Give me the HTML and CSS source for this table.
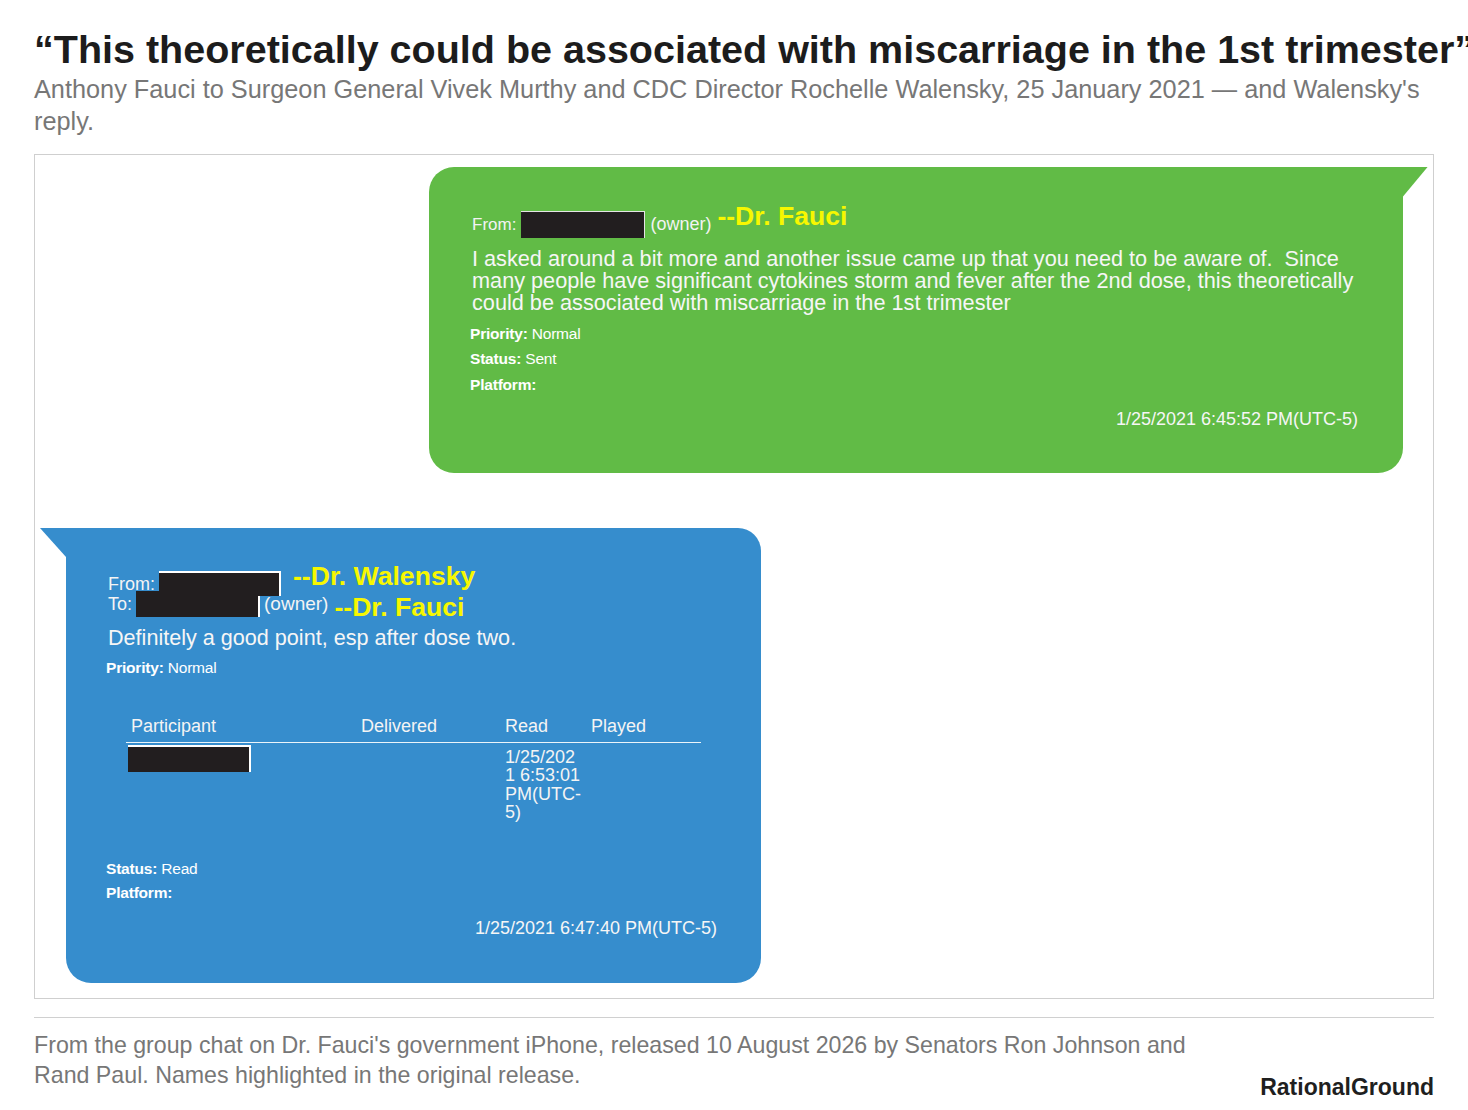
FILE: index.html
```html
<!DOCTYPE html>
<html lang="en">
<head>
<meta charset="utf-8">
<title>“This theoretically could be associated with miscarriage in the 1st trimester”</title>
<link rel="stylesheet" href="styles.css">
</head>
<body>
<main class="page">
  <header class="head">
    <h1 class="title">“This theoretically could be associated with miscarriage in the 1st trimester”</h1>
    <p class="subtitle">Anthony Fauci to Surgeon General Vivek Murthy and CDC Director Rochelle Walensky, 25 January 2021 — and Walensky's reply.</p>
  </header>

  <section class="frame">
    <article class="bubble bubble-green">
      <div class="from-line"><span>From:</span><span class="redact redact-green"></span><span class="owner owner-green">(owner)</span><span class="name name-green">--Dr. Fauci</span></div>
      <p class="msg msg-green">I asked around a bit more and another issue came up that you need to be aware of.&nbsp; Since<br>many people have significant cytokines storm and fever after the 2nd dose, this theoretically<br>could be associated with miscarriage in the 1st trimester</p>
      <div class="meta meta-green">
        <div><b>Priority:</b> Normal</div>
        <div><b>Status:</b> Sent</div>
        <div><b>Platform:</b></div>
      </div>
      <div class="stamp stamp-green">1/25/2021 6:45:52 PM(UTC-5)</div>
    </article>

    <article class="bubble bubble-blue">
      <div class="addr">
        <div class="addr-line"><span>From:</span><span class="redact redact-from"></span><span class="name name-up">--Dr. Walensky</span></div>
        <div class="addr-line"><span>To:</span><span class="redact redact-to"></span><span class="owner owner-blue">(owner)</span><span class="name name-down">--Dr. Fauci</span></div>
      </div>
      <p class="msg msg-blue">Definitely a good point, esp after dose two.</p>
      <div class="meta meta-blue">
        <div><b>Priority:</b> Normal</div>
      </div>
      <div class="receipts">
        <div class="r-head"><span>Participant</span><span>Delivered</span><span>Read</span><span>Played</span></div>
        <div class="r-row">
          <span class="r-part"><span class="redact redact-part"></span></span>
          <span></span>
          <span class="r-read">1/25/202<br>1 6:53:01<br>PM(UTC-<br>5)</span>
          <span></span>
        </div>
      </div>
      <div class="meta meta-status">
        <div><b>Status:</b> Read</div>
        <div><b>Platform:</b></div>
      </div>
      <div class="stamp stamp-blue">1/25/2021 6:47:40 PM(UTC-5)</div>
    </article>
  </section>

  <footer class="foot">
    <p class="caption">From the group chat on Dr. Fauci's government iPhone, released 10 August 2026 by Senators Ron Johnson and Rand Paul. Names highlighted in the original release.</p>
    <span class="brand">RationalGround</span>
  </footer>
</main>
</body>
</html>
```

FILE: styles.css
```css
html {
  overflow-x: hidden;
  background: #ffffff;
}

body {
  margin: 0;
  font-family: "Liberation Sans", Arial, sans-serif;
  color: #222222;
}

.page {
  width: 1400px;
  padding: 26px 34px 0;
}

.title {
  margin: 0;
  font-size: 39.5px;
  line-height: 46px;
  font-weight: bold;
  color: #1c1c1c;
  white-space: nowrap;
}

.subtitle {
  margin: 0.5px 0 0;
  font-size: 25.3px;
  line-height: 32px;
  color: #777777;
}

.frame {
  margin-top: 17px;
  border: 1px solid #cfcfcf;
  padding: 12px 0 15px;
}

.bubble {
  position: relative;
  box-sizing: border-box;
  color: #ffffff;
}

.bubble-green {
  width: 974px;
  margin: 0 30px 0 auto;
  padding: 45px 45px 43px 43px;
  background: #61bb46;
  border-radius: 25px 0 25px 25px;
}

.bubble-green::after {
  content: "";
  position: absolute;
  top: 0;
  right: -25px;
  width: 25px;
  height: 30px;
  background: #61bb46;
  clip-path: polygon(0 0, 100% 0, 0 100%);
}

.bubble-blue {
  width: 695px;
  margin: 55px 0 0 31px;
  padding: 47px 44px 44px 42px;
  background: #368dcd;
  border-radius: 0 23px 25px 25px;
}

.bubble-blue::before {
  content: "";
  position: absolute;
  top: 0;
  left: -26px;
  width: 26px;
  height: 29px;
  background: #368dcd;
  clip-path: polygon(0 0, 100% 0, 100% 100%);
}

.from-line {
  font-size: 17px;
  line-height: 24px;
  white-space: nowrap;
  color: #f3f3f3;
}

.redact {
  display: inline-block;
  box-sizing: border-box;
  background: #221e1f;
  vertical-align: baseline;
}

.redact-green {
  width: 124px;
  height: 27px;
  margin: -12px 0 -8px 5px;
  border-top: 1.5px solid #e4e4e4;
  border-right: 1.5px solid #e4e4e4;
}

.owner {
  margin-left: 5px;
}

.owner-green {
  font-size: 18px;
}

.name {
  margin-left: 9px;
  font-size: 26.6px;
  font-weight: bold;
  line-height: 0;
  color: #f7f700;
  vertical-align: 5px;
}

.name-green {
  margin-left: 6px;
}

.msg {
  margin: 0;
  color: #f6f6f6;
}

.msg-green {
  margin-top: 11px;
  font-size: 21.7px;
  line-height: 22px;
  white-space: nowrap;
}

.meta {
  font-size: 15.5px;
  line-height: 25.5px;
  letter-spacing: -0.2px;
  color: #ffffff;
}

.meta b {
  font-weight: bold;
}

.meta-green {
  margin: 7px 0 0 -2px;
}

.stamp {
  font-size: 18px;
  line-height: 22px;
  text-align: right;
  color: #f6f6f6;
}

.stamp-green {
  margin-top: 11px;
}

.addr {
  font-size: 18px;
  line-height: 19px;
  white-space: nowrap;
  color: #f4f4f4;
}

.redact-from {
  position: relative;
  z-index: 1;
  width: 122px;
  height: 25px;
  margin: -12px 0 -6px 4px;
  border-top: 2px solid #ffffff;
  border-right: 2px solid #ffffff;
}

.redact-to {
  width: 124px;
  height: 26px;
  margin: -12px 0 -7px 4px;
  border-right: 2px solid #ffffff;
}

.owner-blue {
  margin-left: 4px;
  font-size: 19px;
}

.name-up {
  margin-left: 12px;
  vertical-align: 5px;
}

.name-down {
  margin-left: 6px;
  vertical-align: -6px;
}

.msg-blue {
  margin-top: 13px;
  font-size: 21.6px;
  line-height: 22px;
}

.meta-blue {
  margin: 6px 0 0 -2px;
}

.receipts {
  width: 575px;
  margin: 34px 0 0 18px;
  color: #f4f4f4;
}

.r-head,
.r-row {
  display: grid;
  grid-template-columns: 230px 144px 86px 115px;
}

.r-head {
  font-size: 18px;
  line-height: 22px;
  padding-bottom: 5px;
  border-bottom: 1.5px solid rgba(255, 255, 255, 0.9);
}

.r-head span {
  padding-left: 5px;
}

.r-row {
  font-size: 18px;
  line-height: 18.5px;
}

.r-part {
  padding: 2.5px 0 0 2px;
}

.redact-part {
  display: block;
  width: 123px;
  height: 27px;
  border-top: 2px solid #ffffff;
  border-right: 2px solid #ffffff;
}

.r-read {
  padding: 5px 0 0 5px;
}

.meta-status {
  margin: 35px 0 0 -2px;
  line-height: 24px;
}

.stamp-blue {
  margin-top: 12px;
}

.foot {
  margin-top: 18px;
  padding-top: 12px;
  border-top: 1px solid #d0d0d0;
  display: flex;
  align-items: flex-end;
  justify-content: space-between;
  gap: 24px;
}

.caption {
  flex: 1;
  margin: 0 0 12px;
  font-size: 23.2px;
  line-height: 30px;
  color: #777777;
}

.brand {
  font-size: 23px;
  line-height: 30px;
  font-weight: bold;
  color: #1f1f1f;
  white-space: nowrap;
}
```
